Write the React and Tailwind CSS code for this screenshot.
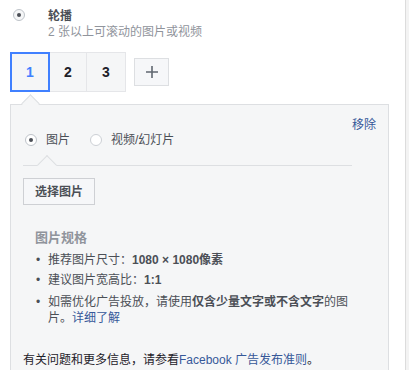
export default function App() {
  const font = "font-['Liberation_Sans','Noto_Sans_CJK_SC',sans-serif]";

  return (
    <div className={`flex w-[409px] h-[370px] overflow-hidden bg-white ${font}`}>
      <div className="flex-1 pl-[10px] pt-[8px]">
        {/* carousel option */}
        <div className="flex pl-[3px]">
          <span className="mt-[1px] flex items-center justify-center w-[12px] h-[12px] rounded-full border border-[#bec3c9] bg-[#f5f6f7]">
            <span className="w-[4px] h-[4px] rounded-full bg-[#4b4f56]" />
          </span>
          <div className="ml-[23px]">
            <div className="text-[12px] leading-[16px] font-bold text-[#4b4f56]">轮播</div>
            <div className="text-[12px] leading-[16px] text-[#90949c]">2 张以上可滚动的图片或视频</div>
          </div>
        </div>

        {/* cards */}
        <div className="flex items-start mt-[12px]">
          <div className="flex">
            <div className="flex items-center justify-center w-[40px] h-[40px] border-2 border-[#4080ff] bg-[#f5f6f7] text-[14px] font-bold text-[#4080ff]">
              1
            </div>
            <div className="flex items-center justify-center w-[37px] h-[40px] border-y border-r border-[#e5e6e9] bg-[#f5f6f7] text-[14px] font-bold text-[#1d2129]">
              2
            </div>
            <div className="flex items-center justify-center w-[39px] h-[40px] border-y border-r border-[#e5e6e9] bg-[#f5f6f7] text-[14px] font-bold text-[#1d2129]">
              3
            </div>
          </div>
          <button className="ml-[8px] mt-[6px] flex items-center justify-center w-[35px] h-[28px] border border-[#dddfe2] bg-[#f6f7f9]">
            <svg width="12" height="12" viewBox="0 0 12 12">
              <path d="M6 0v12M0 6h12" stroke="#606770" strokeWidth="1.6" />
            </svg>
          </button>
        </div>

        {/* card panel */}
        <div className="relative mt-[12px] w-[379px] h-[300px] border border-[#dddfe2] bg-[#f5f6f7] pl-[12px] pr-[12px] pt-[12px]">
          <span className="absolute left-[13px] top-[-8px] w-[13px] h-[13px] rotate-45 border-l border-t border-[#dddfe2] bg-[#f5f6f7]" />

          <div className="flex justify-between">
            <div className="w-[329px] pt-[15px]">
              <div className="flex items-center h-[16px] pl-[2px] text-[12px] text-[#4b4f56]">
                <span className="flex items-center justify-center w-[12px] h-[12px] rounded-full border border-[#bec3c9] bg-white">
                  <span className="w-[4px] h-[4px] rounded-full bg-[#4b4f56]" />
                </span>
                <span className="ml-[9px]">图片</span>
                <span className="ml-[20px] w-[12px] h-[12px] rounded-full border border-[#ccd0d5] bg-white" />
                <span className="ml-[9px]">视频/幻灯片</span>
              </div>
              <div className="relative mt-[17px] h-[1px] bg-[#dddfe2]">
                <span className="absolute left-[17px] top-[-7px] w-[14px] h-[14px] rotate-45 border-l border-t border-[#dddfe2] bg-[#f5f6f7]" />
              </div>
            </div>
            <span className="text-[12px] leading-[16px] text-[#365899]">移除</span>
          </div>

          <button className="mt-[12px] h-[27px] px-[11px] border border-[#ced0d4] bg-[#f6f7f9] text-[12px] font-bold text-[#4b4f56]">
            选择图片
          </button>

          <div className="pl-[12px] mt-[24px]">
            <div className="text-[13px] leading-[18px] font-bold text-[#90949c]">图片规格</div>
            <ul className="text-[12px] leading-[16px] text-[#4b4f56]">
              <li className="flex mt-[5px]">
                <span className="w-[13px] pl-[1px]">•</span>
                <span>
                  推荐图片尺寸：<b>1080 × 1080像素</b>
                </span>
              </li>
              <li className="flex mt-[4px]">
                <span className="w-[13px] pl-[1px]">•</span>
                <span>
                  建议图片宽高比：<b>1:1</b>
                </span>
              </li>
              <li className="flex mt-[6px]">
                <span className="w-[13px] pl-[1px]">•</span>
                <span className="w-[305px]">
                  如需优化广告投放，请使用<b>仅含少量文字或不含文字</b>的图片。
                  <span className="text-[#365899]">详细了解</span>
                </span>
              </li>
            </ul>
          </div>

          <div className="mt-[26px] text-[12px] leading-[16px] text-[#1d2129]">
            有关问题和更多信息，请参看<span className="text-[#365899]">Facebook 广告发布准则</span>。
          </div>
        </div>
      </div>
      <div className="w-[4px] h-full border-l border-[#dcdcdc] bg-[#f3f3f3]" />
    </div>
  );
}
